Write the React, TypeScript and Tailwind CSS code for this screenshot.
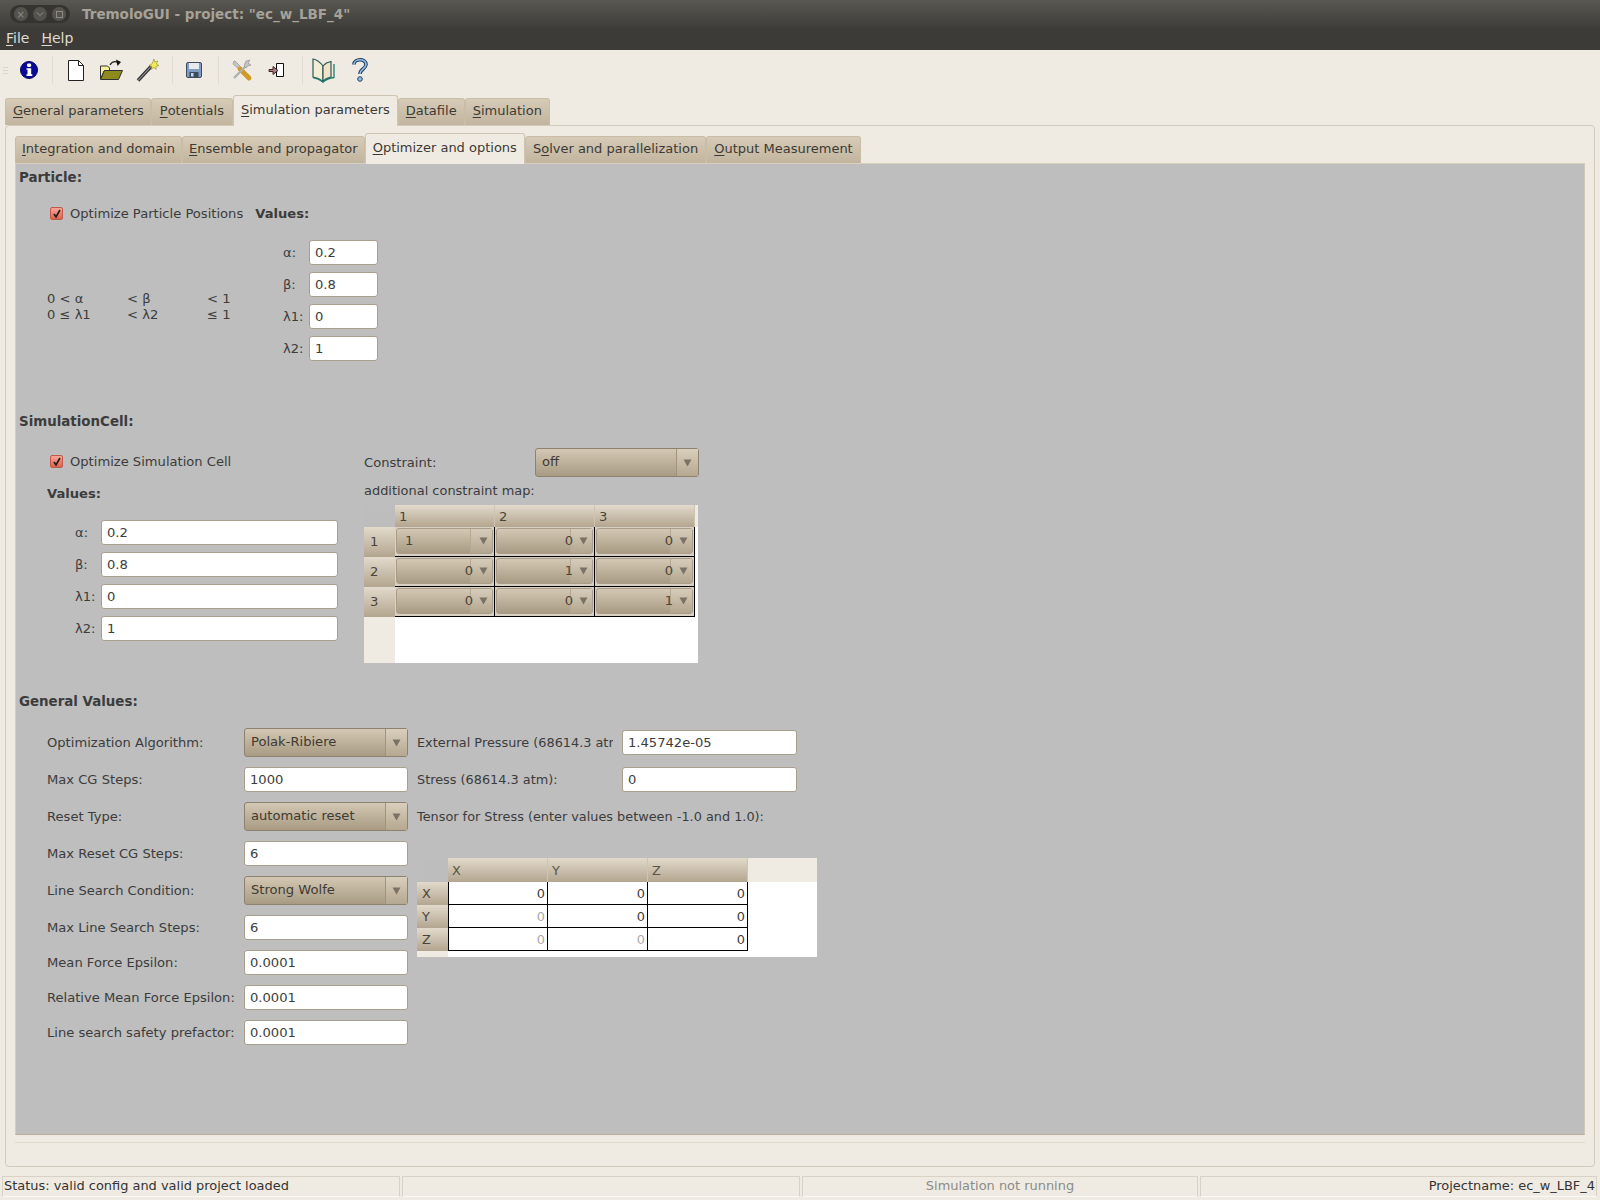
import type { ReactNode } from "react";

const comboFill = "bg-gradient-to-b from-[#d3c8b4] to-[#a99b83]";
const tabFill = "bg-gradient-to-b from-[#d6cbb7] to-[#c2b59f]";
const headFill = "bg-gradient-to-b from-[#e2dacb] to-[#b3a690]";

function Mn({ u, rest }: { u: string; rest: string }) {
  return (
    <>
      <span className="underline underline-offset-2 decoration-1">{u}</span>
      {rest}
    </>
  );
}

function Arrow() {
  return (
    <svg width="9" height="8" viewBox="0 0 9 8" aria-hidden="true">
      <path d="M0.5 0.5h8L4.5 7.5z" fill="#7b7265" />
    </svg>
  );
}

function Combo({ value, className }: { value: string; className: string }) {
  return (
    <div className={`flex h-[29px] rounded-[3px] border border-[#8d8270] ${comboFill} ${className}`}>
      <div className="flex-1 pl-[6px] leading-[26px] text-[#3f3a32]">{value}</div>
      <div className="flex w-[22px] items-center justify-center border-l border-[#a0947f] bg-gradient-to-b from-[#d9cfbd] to-[#b5a890]">
        <Arrow />
      </div>
    </div>
  );
}

function Field({ value, className }: { value: string; className: string }) {
  return (
    <div className={`h-[25px] rounded-[3px] border border-[#a89f8e] bg-white pl-[5px] leading-[23px] text-[#3c3c3c] ${className}`}>
      {value}
    </div>
  );
}

function Check({ label }: { label: string }) {
  return (
    <div className="flex items-center">
      <span className="ml-[3px] mr-[7px] flex h-[13px] w-[13px] items-center justify-center rounded-[2px] border border-[#c0594b] bg-gradient-to-b from-[#f4a697] to-[#e0604f]">
        <svg width="10" height="10" viewBox="0 0 10 10" aria-hidden="true">
          <path d="M2 5l2 3 4-7" fill="none" stroke="#2a1d1a" strokeWidth="1.7" />
        </svg>
      </span>
      <span>{label}</span>
    </div>
  );
}

function ValueRows({ labelWidth, fieldClass }: { labelWidth: string; fieldClass: string }) {
  return (
    <div className="flex flex-col gap-[7px]">
      {[
        ["α:", "0.2"],
        ["β:", "0.8"],
        ["λ1:", "0"],
        ["λ2:", "1"],
      ].map(([label, value]) => (
        <div key={label} className="flex items-center">
          <span className={labelWidth}>{label}</span>
          <Field value={value} className={fieldClass} />
        </div>
      ))}
    </div>
  );
}

function GenRow({ label, h, children }: { label: string; h: string; children: ReactNode }) {
  return (
    <div className={`flex items-center ${h}`}>
      <span className="w-[197px] shrink-0 whitespace-nowrap">{label}</span>
      {children}
    </div>
  );
}

function MainTabs() {
  const idle = `flex h-[27px] items-center rounded-t-[3px] border border-b-0 border-[#c9bda7] pb-[4px] text-[#3c3a35] ${tabFill}`;
  return (
    <div className="flex h-[30px] items-end pl-[5px] text-[13px]">
      <div className={`${idle} pl-[7px] pr-[6px]`}><Mn u="G" rest="eneral parameters" /></div>
      <div className={`${idle} px-[8px]`}><Mn u="P" rest="otentials" /></div>
      <div className="relative z-10 mb-[-1px] flex h-[31px] items-center rounded-t-[3px] border border-b-0 border-[#cdc4b4] bg-[#f0ebe2] px-[7px] pb-[3px] text-[#3c3a35]">
        <Mn u="S" rest="imulation parameters" />
      </div>
      <div className={`${idle} px-[7px]`}><Mn u="D" rest="atafile" /></div>
      <div className={`${idle} px-[7px]`}><Mn u="S" rest="imulation" /></div>
    </div>
  );
}

function SubTabs() {
  const idle = `flex h-[27px] items-center rounded-t-[3px] border border-b-0 border-[#c9bda7] pb-[3px] text-[#3c3a35] ${tabFill}`;
  return (
    <div className="flex h-[30px] items-end text-[13px]">
      <div className={`${idle} px-[6px]`}><Mn u="I" rest="ntegration and domain" /></div>
      <div className={`${idle} px-[6px]`}><Mn u="E" rest="nsemble and propagator" /></div>
      <div className="relative z-10 mb-[-1px] flex h-[31px] items-center rounded-t-[3px] border border-b-0 border-[#cdc4b4] bg-[#f0ebe2] px-[7px] pb-[3px] text-[#3c3a35]">
        <Mn u="O" rest="ptimizer and options" />
      </div>
      <div className={`${idle} px-[7px]`}>S<Mn u="o" rest="lver and parallelization" /></div>
      <div className={`${idle} px-[7px]`}><Mn u="O" rest="utput Measurement" /></div>
    </div>
  );
}

function Sep({ className }: { className: string }) {
  return <div className={`h-[28px] w-px bg-[#e2dcd0] ${className}`} />;
}

function ToolIcons() {
  return (
    <div className="flex h-[40px] items-center pl-[3px]">
      <div className="flex flex-col gap-[2px]">
        <span className="h-px w-[5px] bg-[#dcd6ca]" />
        <span className="h-px w-[5px] bg-[#dcd6ca]" />
        <span className="h-px w-[5px] bg-[#dcd6ca]" />
      </div>
      <svg className="ml-[9px]" width="24" height="24" viewBox="0 0 24 24" aria-hidden="true">
        <circle cx="12" cy="12" r="8.500" fill="#0a0a9a" stroke="#05055f" />
        <rect x="10" y="5.500" width="4.200" height="3.400" rx="1.300" fill="#fff" />
        <path d="M9.500 10.200h4.700v6h1.100v1.800H9.500v-1.800h1v-4.400h-1z" fill="#fff" />
      </svg>
      <Sep className="ml-[11px]" />
      <svg className="ml-[13px]" width="20" height="24" viewBox="0 0 20 24" aria-hidden="true">
        <path d="M2.500 2.500h10l5 5v15h-15z" fill="#fff" stroke="#222" />
        <path d="M12.500 2.500v5h5" fill="none" stroke="#222" />
      </svg>
      <svg className="ml-[13px]" width="24" height="24" viewBox="0 0 24 24" aria-hidden="true">
        <path d="M1.500 8h7l2 2v3H5L1.500 21z" fill="#f7f09c" stroke="#333" />
        <path d="M1.500 21.500L5.500 12.500h18l-4 9z" fill="#8e8a1e" stroke="#333" />
        <path d="M11 7c2-3.500 5-4 8-2.500" fill="none" stroke="#222" strokeWidth="1.200" />
        <path d="M17 1.500l5 2.500-3.500 4z" fill="#111" />
      </svg>
      <svg className="ml-[13px]" width="24" height="26" viewBox="0 0 24 26" aria-hidden="true">
        <path d="M2 23.500L15.500 9" stroke="#333" strokeWidth="3.400" />
        <path d="M2 23.500L15.500 9" stroke="#999" strokeWidth="1.100" />
        <path d="M18 2l.8 3 3-1-1.400 3 2.600 1.600-3 .8.2 3-2.400-1.800-2.400 1.800.4-3-2.800-1 2.800-1.200z" fill="#f5ea4f" stroke="#8a8a30" strokeWidth=".6" />
      </svg>
      <Sep className="ml-[12px]" />
      <svg className="ml-[11px]" width="20" height="20" viewBox="0 0 20 20" aria-hidden="true">
        <rect x="2.500" y="2.500" width="15" height="15" rx="1.500" fill="#7f9dc4" stroke="#3f4a5c" />
        <rect x="5" y="3" width="10" height="6" fill="#e7e9ee" />
        <rect x="5.500" y="12" width="9" height="5" fill="#3c4a60" />
        <rect x="7" y="13" width="2.500" height="3.500" fill="#cdd5e0" />
      </svg>
      <Sep className="ml-[14px]" />
      <svg className="ml-[11px]" width="24" height="24" viewBox="0 0 24 24" aria-hidden="true">
        <path d="M5 3l7 7-2 2-7-6 1-3z" fill="#c4c4c4" stroke="#8a8a8a" strokeWidth=".6" />
        <path d="M10 11l9 9" stroke="#d09a24" strokeWidth="4.800" strokeLinecap="round" />
        <path d="M4 20L16 8" stroke="#b0b0b0" strokeWidth="2.400" />
        <path d="M14 8l2-5 4-1-2 3 3 2-3 1-2 2z" fill="#c4c4c4" stroke="#8a8a8a" strokeWidth=".6" />
      </svg>
      <svg className="ml-[13px]" width="20" height="20" viewBox="0 0 20 20" aria-hidden="true">
        <path d="M9.500 3.500h7v13h-7z" fill="#fff" stroke="#111" />
        <path d="M2 9.500h4v-3l5 4-5 4v-3H2z" fill="#b07a7e" stroke="#3a2526" />
      </svg>
      <Sep className="ml-[15px]" />
      <svg className="ml-[7px]" width="26" height="26" viewBox="0 0 26 26" aria-hidden="true">
        <path d="M13 9C10 5 6 2.500 3 2v18c3.500 .5 7 2 10 4.500z" fill="#f5ecd8" stroke="#2c5a55" strokeWidth="1.200" />
        <path d="M13 9c2-2.500 5-4 8-4.500V20c-3 .5-6 2-8 4.500z" fill="#f2e2c8" stroke="#2c5a55" strokeWidth="1.200" />
        <path d="M3 20.500c4 .6 7 2 10 4.500 3-2.500 6-3.900 11-4.500V7" fill="none" stroke="#1f7a6e" strokeWidth="1.300" />
      </svg>
      <svg className="ml-[14px]" width="20" height="28" viewBox="0 0 20 28" aria-hidden="true">
        <path d="M4 8.500C4 2.500 16 2 16 8.500c0 4.500-6 4.500-6 9.500" fill="none" stroke="#23405f" strokeWidth="3.600" />
        <path d="M4 8.500C4 2.500 16 2 16 8.500c0 4.500-6 4.500-6 9.500" fill="none" stroke="#8fc0e6" strokeWidth="1.600" />
        <circle cx="10" cy="23" r="2.300" fill="#8fc0e6" stroke="#23405f" />
      </svg>
    </div>
  );
}

function ConstraintCell({ value, left }: { value: string; left?: boolean }) {
  return (
    <div className="flex h-[30px] border-b border-r border-black bg-[#d8d0c2] p-px pb-[2px]">
      <div className={`flex flex-1 rounded-[3px] border border-[#a99d89] ${comboFill}`}>
        <div className={`relative z-10 flex-1 leading-[24px] text-[#4a443a] ${left ? "pl-[8px] text-left" : "-mr-[3px] text-right"}`}>{value}</div>
        <div className="flex w-[22px] items-center justify-center border-l border-[#b5a994] bg-gradient-to-b from-[#d6ccba] to-[#b4a790] pl-[3px]">
          <Arrow />
        </div>
      </div>
    </div>
  );
}

function ConstraintTable() {
  const rows = [
    ["1", "0", "0"],
    ["0", "1", "0"],
    ["0", "0", "1"],
  ];
  return (
    <div className="flex h-[158px] w-[334px] flex-col bg-white">
      <div className="flex h-[22px] bg-[#efebe3]">
        <div className="w-[31px] bg-[#bdbdbd]" />
        {["1", "2", "3"].map((c) => (
          <div key={c} className={`w-[100px] border-r border-[#cdc4b4] pl-[4px] leading-[24px] text-[#4a443a] ${headFill}`}>{c}</div>
        ))}
      </div>
      {rows.map((row, i) => (
        <div key={i} className="flex">
          <div className={`w-[31px] pl-[6px] leading-[30px] text-[#4a443a] ${headFill}`}>{i + 1}</div>
          {row.map((v, j) => (
            <div key={j} className="w-[100px]">
              <ConstraintCell value={v} left={i === 0 && j === 0} />
            </div>
          ))}
        </div>
      ))}
      <div className="w-[31px] flex-1 bg-[#efebe3]" />
    </div>
  );
}

function StressTable() {
  const rows = [
    { name: "X", vals: [false, false, false] },
    { name: "Y", vals: [true, false, false] },
    { name: "Z", vals: [true, true, false] },
  ];
  return (
    <div className="mt-[27px] flex h-[99px] w-[400px] flex-col bg-white">
      <div className="flex h-[24px] bg-[#efebe3]">
        <div className="w-[31px] bg-[#bdbdbd]" />
        {["X", "Y", "Z"].map((c) => (
          <div key={c} className={`w-[100px] border-r border-[#cdc4b4] pl-[4px] leading-[26px] text-[#5a5448] ${headFill}`}>{c}</div>
        ))}
      </div>
      {rows.map((row) => (
        <div key={row.name} className="flex h-[23px]">
          <div className={`w-[31px] pl-[5px] leading-[24px] text-[#4a443a] ${headFill}`}>{row.name}</div>
          {row.vals.map((dim, j) => (
            <div key={j} className={`w-[100px] border-b border-r border-black pr-[2px] text-right leading-[24px] ${j === 0 ? "border-l" : ""} ${dim ? "text-[#a9a9a9]" : "text-[#3c3c3c]"}`}>
              0
            </div>
          ))}
        </div>
      ))}
      <div className="w-[31px] flex-1 bg-[#efebe3]" />
    </div>
  );
}

function StatusCell({ className, children }: { className: string; children: ReactNode }) {
  return (
    <div className={`h-[21px] border border-[#d8d2c6] border-b-[#fbf9f5] text-[12.95px] leading-[17px] ${className}`}>{children}</div>
  );
}

export default function App() {
  return (
    <div className="flex h-[1200px] w-[1600px] flex-col overflow-hidden bg-[#f0ebe2] font-['DejaVu_Sans',sans-serif] text-[13.1px] leading-[17px] text-[#3c3c3c]">
      <div className="flex h-[28px] items-center bg-gradient-to-b from-[#5a5852] to-[#3e3d39]">
        <div className="ml-[10px] flex h-[18px] w-[60px] items-center justify-around rounded-full bg-[#353430] px-[1px]">
          <span className="flex h-[14px] w-[14px] items-center justify-center rounded-full bg-[#55534e] text-[10px] text-[#8d8b83]">×</span>
          <span className="flex h-[14px] w-[14px] items-center justify-center rounded-full bg-[#55534e]">
            <svg width="8" height="5" viewBox="0 0 8 5" aria-hidden="true"><path d="M.5 .5l3.500 3 3.500-3" fill="none" stroke="#8d8b83" /></svg>
          </span>
          <span className="flex h-[14px] w-[14px] items-center justify-center rounded-full bg-[#55534e]">
            <span className="h-[7px] w-[7px] border border-[#8d8b83]" />
          </span>
        </div>
        <span className="ml-[12px] text-[13.5px] font-bold text-[#a6a298]">TremoloGUI - project: "ec_w_LBF_4"</span>
      </div>

      <div className="flex h-[22px] items-center gap-[12px] bg-[#3c3b37] pb-[2px] pl-[6px] text-[14px] text-[#dfdbd2]">
        <span><Mn u="F" rest="ile" /></span>
        <span><Mn u="H" rest="elp" /></span>
      </div>

      <ToolIcons />

      <div className="mt-[5px]"><MainTabs /></div>

      <div className="mx-[5px] flex h-[1042px] flex-col rounded-[4px] border border-[#d2cbbc] px-[9px] pt-[7px]">
        <SubTabs />

        <div className="h-[972px] border border-[#d6cfc0] border-b-[#b8ae9d] border-r-[#d0c9b9] bg-[#bebebe] pl-[3px]">
          <div className="mt-[5px] text-[13.4px] font-bold text-[#3c3c3c]">Particle:</div>

          <div className="ml-[28px] mt-[19px] flex items-center">
            <Check label="Optimize Particle Positions" />
            <span className="ml-[12px] font-bold">Values:</span>
          </div>

          <div className="mt-[18px] flex items-center">
            <div className="ml-[28px] mt-[12px] w-[236px]">
              <div className="flex"><span className="w-[80px]">0 &lt; α</span><span className="w-[80px]">&lt; β</span><span>&lt; 1</span></div>
              <div className="-mt-px flex"><span className="w-[80px]">0 ≤ λ1</span><span className="w-[80px]">&lt; λ2</span><span>≤ 1</span></div>
            </div>
            <ValueRows labelWidth="w-[26px]" fieldClass="w-[69px]" />
          </div>

          <div className="mt-[52px] text-[13.4px] font-bold">SimulationCell:</div>

          <div className="mt-[17px] flex">
            <div className="ml-[28px] w-[317px]">
              <div className="pt-[6px]"><Check label="Optimize Simulation Cell" /></div>
              <div className="mt-[15px] font-bold">Values:</div>
              <div className="ml-[28px] mt-[18px]">
                <ValueRows labelWidth="w-[26px]" fieldClass="w-[237px]" />
              </div>
            </div>
            <div className="pt-px">
              <div className="flex h-[29px] items-center">
                <span className="w-[171px]">Constraint:</span>
                <Combo value="off" className="w-[164px]" />
              </div>
              <div className="mt-[5px] text-[12.95px]">additional constraint map:</div>
              <div className="mt-[6px]"><ConstraintTable /></div>
            </div>
          </div>

          <div className="mt-[30px] text-[13.4px] font-bold">General Values:</div>

          <div className="mt-[18px] flex">
            <div className="ml-[28px] w-[361px]">
              <GenRow label="Optimization Algorithm:" h="h-[29px]"><Combo value="Polak-Ribiere" className="w-[164px]" /></GenRow>
              <GenRow label="Max CG Steps:" h="mt-[8px] h-[29px]"><Field value="1000" className="w-[164px]" /></GenRow>
              <GenRow label="Reset Type:" h="mt-[8px] h-[29px]"><Combo value="automatic reset" className="w-[164px]" /></GenRow>
              <GenRow label="Max Reset CG Steps:" h="mt-[8px] h-[29px]"><Field value="6" className="w-[164px]" /></GenRow>
              <GenRow label="Line Search Condition:" h="mt-[8px] h-[29px]"><Combo value="Strong Wolfe" className="w-[164px]" /></GenRow>
              <GenRow label="Max Line Search Steps:" h="mt-[8px] h-[29px]"><Field value="6" className="w-[164px]" /></GenRow>
              <GenRow label="Mean Force Epsilon:" h="mt-[6px] h-[29px]"><Field value="0.0001" className="w-[164px]" /></GenRow>
              <GenRow label="Relative Mean Force Epsilon:" h="mt-[6px] h-[29px]"><Field value="0.0001" className="w-[164px]" /></GenRow>
              <GenRow label="Line search safety prefactor:" h="mt-[6px] h-[29px]"><Field value="0.0001" className="w-[164px]" /></GenRow>
            </div>
            <div className="ml-[9px] text-[12.85px]">
              <div className="flex h-[29px] items-center">
                <span className="w-[196px] overflow-hidden whitespace-nowrap">External Pressure (68614.3 atm):</span>
                <Field value="1.45742e-05" className="ml-[9px] w-[175px] text-[13.1px]" />
              </div>
              <div className="mt-[8px] flex h-[29px] items-center">
                <span className="w-[205px]">Stress (68614.3 atm):</span>
                <Field value="0" className="w-[175px] text-[13.1px]" />
              </div>
              <div className="mt-[8px] flex h-[29px] items-center">Tensor for Stress (enter values between -1.0 and 1.0):</div>
              <StressTable />
            </div>
          </div>
        </div>

        <div className="mt-[7px] border-t border-[#e0dacd]" />
      </div>

      <div className="ml-[2px] mt-[9px] flex gap-[2px]">
        <StatusCell className="w-[398px] pl-[1px] text-[#333]">Status: valid config and valid project loaded</StatusCell>
        <StatusCell className="w-[398px]">{""}</StatusCell>
        <StatusCell className="w-[396px] text-center text-[#8b8b88]">Simulation not running</StatusCell>
        <StatusCell className="w-[397px] pr-[1px] text-right text-[#333]">Projectname: ec_w_LBF_4</StatusCell>
      </div>
    </div>
  );
}
